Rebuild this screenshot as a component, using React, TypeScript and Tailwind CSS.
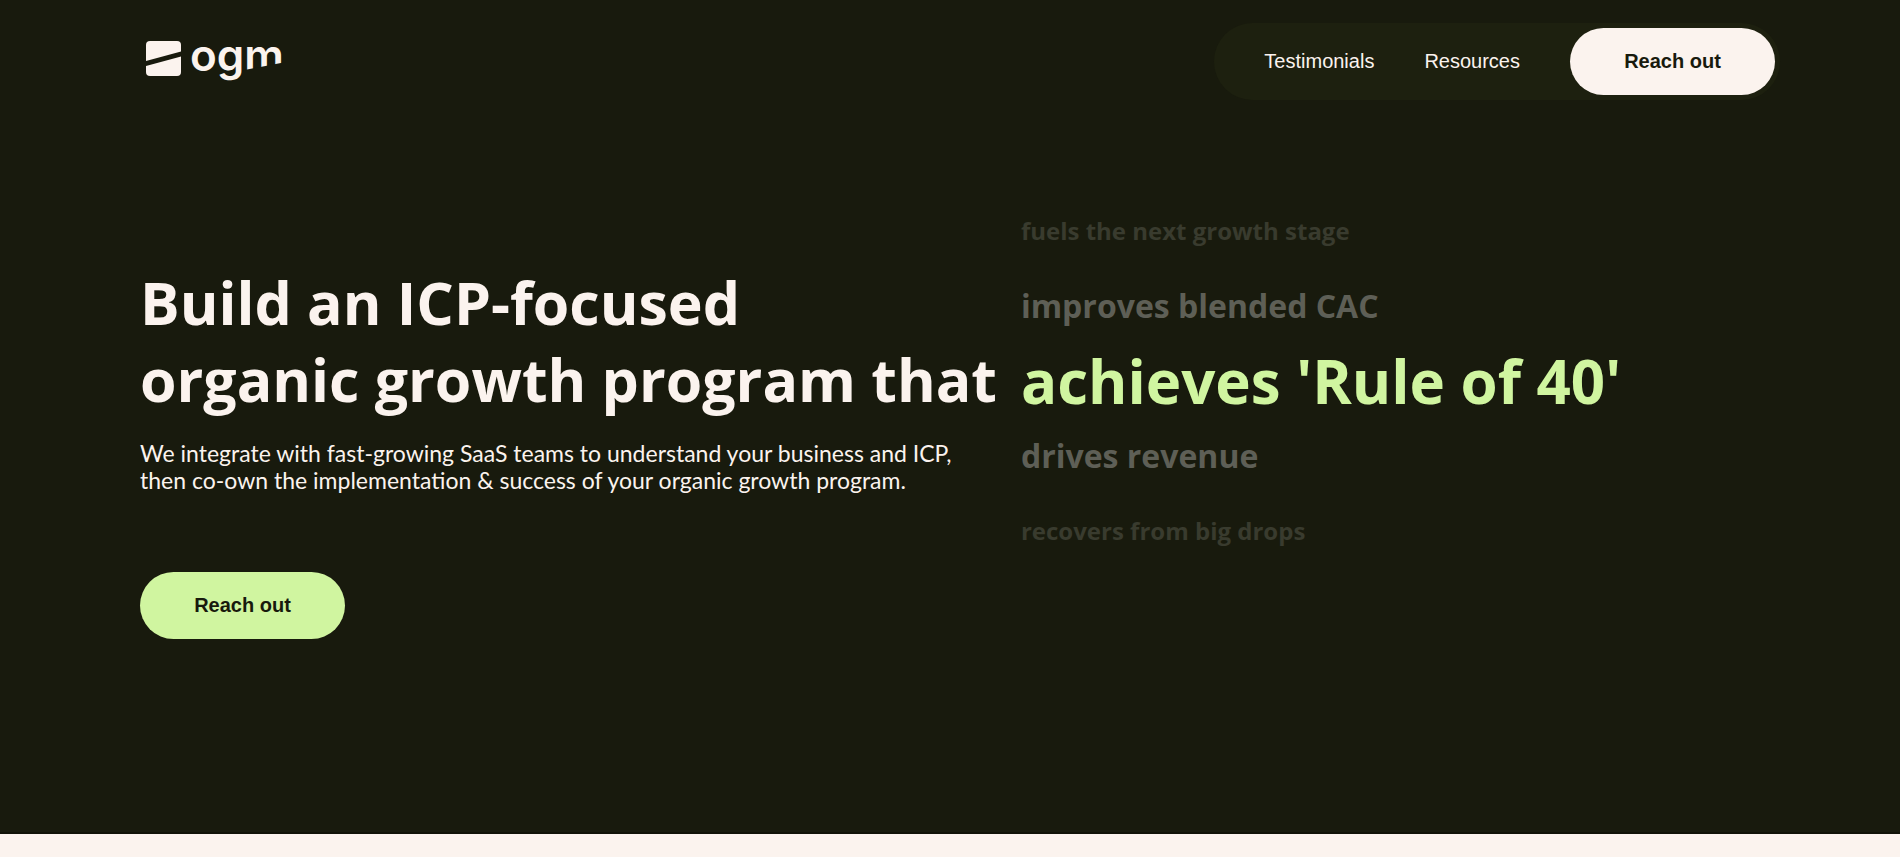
const display = "font-['Open_Sans',sans-serif] font-bold whitespace-nowrap";

const buttonClass =
  "flex h-[67px] w-[205px] items-center justify-center rounded-full pb-0.5 text-xl font-bold text-[#181a0d]";

const outcomes = [
  { text: 'fuels the next growth stage', style: 'text-[24px] text-[#393b2e]' },
  { text: 'improves blended CAC', style: 'text-[32px] text-[#5e5f56]' },
  { text: "achieves 'Rule of 40'", style: 'text-[60px] text-[#d0f5a0]' },
  { text: 'drives revenue', style: 'text-[32px] text-[#5e5f56]' },
  { text: 'recovers from big drops', style: 'text-[24px] text-[#393b2e]' },
];

function Logo() {
  return (
    <a href="#home" aria-label="ogm home" className="block">
      <svg width="160" height="61" viewBox="0 0 160 61" fill="#fbf3ee" className="overflow-visible">
        <path d="M10 10H37Q41 10 41 14V20.5L6 30V14Q6 10 10 10Z" />
        <path d="M41 25.5V41Q41 45 37 45H10Q6 45 6 41V35Z" />
        <text x="50" y="40" fontSize="44" fontWeight="600" className="font-['Inter',sans-serif]">ogm</text>
        <path d="M102 39.5L146 31V43H102Z" fill="#181a0d" />
      </svg>
    </a>
  );
}

export default function App() {
  return (
    <div className="min-h-screen bg-[#fbf3ee] font-['Liberation_Sans',Arial,sans-serif] text-[#fbf3ee]">
      <div className="border-b-2 border-[#111208] bg-[#181a0d] pb-[193px]">
        <header className="flex items-center justify-between pt-[23px] pr-[120px] pl-[140px]">
          <Logo />
          <nav className="flex items-center gap-[50px] rounded-full bg-[#1d200f] py-[5px] pr-[5px] pl-[50px] text-xl">
            <a href="#testimonials" className="pb-0.5">Testimonials</a>
            <a href="#resources" className="pb-0.5">Resources</a>
            <button type="button" className={`${buttonClass} bg-[#fbf3ee]`}>Reach out</button>
          </nav>
        </header>
        <main className="flex items-start gap-6 pt-[94px] pr-[120px] pl-[140px]">
          <section className="pt-[70px]">
            <h1 className={`${display} text-[59px] leading-[77px]`}>
              Build an ICP-focused
              <br />
              organic growth program that
            </h1>
            <p className="pt-[22px] font-['Lato',sans-serif] text-[23px] leading-[27px]">
              We integrate with fast-growing SaaS teams to understand your business and ICP,
              <br />
              then co-own the implementation &amp; success of your organic growth program.
            </p>
            <button type="button" className={`${buttonClass} mt-[78px] bg-[#d0f5a0]`}>Reach out</button>
          </section>
          <ul className={display}>
            {outcomes.map((item) => (
              <li key={item.text} className={`flex h-[75px] items-center pb-0.5 ${item.style}`}>
                {item.text}
              </li>
            ))}
          </ul>
        </main>
      </div>
    </div>
  );
}
